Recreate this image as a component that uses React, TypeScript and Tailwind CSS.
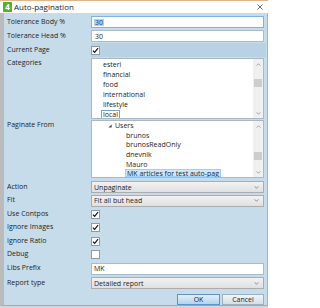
import React from 'react'

function Check() {
  return (
    <svg viewBox="0 0 9 9" className="w-[7px] h-[7px]">
      <path d="M1.2 4.6 L3.4 6.8 L7.8 1.4" fill="none" stroke="#111" strokeWidth="1.5" />
    </svg>
  )
}

function CheckBox({ checked }: { checked?: boolean }) {
  return (
    <div className="w-[9px] h-[9px] bg-white border border-[#8a9baa] flex items-center justify-center">
      {checked && <Check />}
    </div>
  )
}

function Chevron({ up, color = '#8a8a8a' }: { up?: boolean; color?: string }) {
  return (
    <svg viewBox="0 0 6 4" className="w-[5px] h-[3px]">
      <path d={up ? 'M0.5 3.5 L3 1 L5.5 3.5' : 'M0.5 0.5 L3 3 L5.5 0.5'} fill="none" stroke={color} strokeWidth="1" />
    </svg>
  )
}

function ScrollBar({ thumbTop }: { thumbTop: string }) {
  return (
    <div className="w-[10px] bg-[#f0f0f0] flex flex-col">
      <div className="h-[10px] flex items-center justify-center">
        <Chevron up />
      </div>
      <div className="flex-1">
        <div className={`${thumbTop} h-[8px] bg-[#cdcdcd] mx-[1px]`} />
      </div>
      <div className="h-[10px] flex items-center justify-center">
        <Chevron />
      </div>
    </div>
  )
}

function Select({ value }: { value: string }) {
  return (
    <div className="h-[12px] w-full border border-[#acacac] bg-gradient-to-b from-[#f2f2f2] to-[#e0e0e0] flex items-center pl-[2px] pr-[4px]">
      <span className="flex-1 leading-none">{value}</span>
      <Chevron color="#6f6f6f" />
    </div>
  )
}

function Label({ children, top }: { children: React.ReactNode; top?: boolean }) {
  return (
    <div className={top ? 'w-[84px] h-[10px] mt-[1px] flex items-center' : 'w-[84px] flex items-center'}>
      {children}
    </div>
  )
}

const categories = ['esteri', 'financial', 'food', 'international', 'lifestyle']
const users = ['brunos', 'brunosReadOnly', 'dnevnik', 'Mauro']

export default function App() {
  return (
    <div className="w-[268px] h-[308px] flex flex-col bg-[#c7dcea] text-[7px] text-[#1d1d1d] font-['Open_Sans',sans-serif] overflow-hidden border-t border-[#e2b48c]">
      <div className="h-[12px] bg-white flex items-center pl-[3px] pr-[5px]">
        <div className="w-[9px] h-[10px] bg-[#56b12c] text-white font-bold text-[8px] leading-none flex items-center justify-center">4</div>
        <span className="ml-[2px] flex-1 text-[8px] leading-none">Auto-pagination</span>
        <svg viewBox="0 0 8 8" className="w-[6px] h-[6px]">
          <path d="M0.5 0.5 L7.5 7.5 M7.5 0.5 L0.5 7.5" stroke="#222" strokeWidth="0.9" />
        </svg>
      </div>

      <div className="flex-1 flex flex-col pt-[2px] pl-[3px] pr-[3px] border-l-4 border-l-[#bbbbbb] border-r border-r-[#9fb5c6] border-b border-b-[#a7a7a7]">
        <div className="flex h-[14px]">
          <Label>Tolerance Body %</Label>
          <div className="w-[173px] flex items-center">
            <div className="h-[12px] w-full bg-white border border-[#7fb2e3] flex items-center pl-[2px]">
              <span className="bg-[#a9d1f4] text-[#1f3f74] leading-none px-[1px]">30</span>
            </div>
          </div>
        </div>
        <div className="flex h-[14px]">
          <Label>Tolerance Head %</Label>
          <div className="w-[173px] flex items-center">
            <div className="h-[12px] w-full bg-white border border-[#a9bccb] flex items-center pl-[3px] leading-none">30</div>
          </div>
        </div>
        <div className="flex h-[14px]">
          <Label>Current Page</Label>
          <div className="w-[175px] -mr-[2px] flex items-center bg-[#b8d2e4]">
            <CheckBox checked />
          </div>
        </div>

        <div className="flex h-[62px]">
          <Label top>Categories</Label>
          <div className="w-[173px] h-[61px] mt-[1px] bg-white border border-[#a9b8c4] flex">
            <div className="flex-1 overflow-hidden pl-[11px]">
              {categories.map((c) => (
                <div key={c} className="h-[10px] flex items-center leading-none">{c}</div>
              ))}
              <div className="h-[10px] flex items-center leading-none -ml-[2px]">
                <span className="border border-[#7c9fc4] px-[1px] h-[9px] flex items-center">local</span>
              </div>
            </div>
            <ScrollBar thumbTop="mt-[10px]" />
          </div>
        </div>

        <div className="flex h-[61px]">
          <Label top>Paginate From</Label>
          <div className="w-[173px] h-[58px] mt-[1px] bg-white border border-[#a9b8c4] flex">
            <div className="flex-1 overflow-hidden">
              <div className="h-[9.6px] flex items-center leading-none pl-[16px]">
                <svg viewBox="0 0 5 5" className="w-[4px] h-[4px]">
                  <path d="M4.5 0.5 L4.5 4.5 L0.5 4.5 Z" fill="#444" />
                </svg>
                <span className="ml-[3px]">Users</span>
              </div>
              {users.map((u) => (
                <div key={u} className="h-[9.6px] flex items-center leading-none pl-[34px]">{u}</div>
              ))}
              <div className="h-[9px] flex items-start leading-none pl-[33px]">
                <span className="bg-[#cce8ff] border border-[#99d1ff] px-[1px] h-[8.5px] flex items-center whitespace-nowrap">MK articles for test auto-pag</span>
              </div>
            </div>
            <ScrollBar thumbTop="mt-[21px]" />
          </div>
        </div>

        <div className="flex h-[14px]">
          <Label>Action</Label>
          <div className="w-[173px] flex items-center"><Select value="Unpaginate" /></div>
        </div>
        <div className="flex h-[13px]">
          <Label>Fit</Label>
          <div className="w-[173px] flex items-center"><Select value="Fit all but head" /></div>
        </div>
        <div className="flex h-[14px]">
          <Label>Use Contpos</Label>
          <div className="w-[173px] flex items-center"><CheckBox checked /></div>
        </div>
        <div className="flex h-[13px]">
          <Label>Ignore Images</Label>
          <div className="w-[173px] flex items-center"><CheckBox checked /></div>
        </div>
        <div className="flex h-[14px]">
          <Label>Ignore Ratio</Label>
          <div className="w-[173px] flex items-center"><CheckBox checked /></div>
        </div>
        <div className="flex h-[13px]">
          <Label>Debug</Label>
          <div className="w-[173px] flex items-center"><CheckBox /></div>
        </div>
        <div className="flex h-[15px]">
          <Label>Libs Prefix</Label>
          <div className="w-[173px] flex items-center">
            <div className="h-[12px] w-full bg-white border border-[#a9bccb] flex items-center pl-[2px] leading-none">MK</div>
          </div>
        </div>
        <div className="flex h-[14px]">
          <Label>Report type</Label>
          <div className="w-[173px] flex items-center"><Select value="Detailed report" /></div>
        </div>

        <div className="flex h-[15px] justify-end items-end gap-[2px]">
          <button className="w-[43px] h-[11px] border border-[#5f93c4] bg-gradient-to-b from-[#e2eff9] to-[#b3d4ee] leading-none text-[7px]">OK</button>
          <button className="w-[42px] h-[11px] border border-[#9bb0c1] bg-gradient-to-b from-[#f1f5f8] to-[#d3dfe8] leading-none text-[7px]">Cancel</button>
        </div>
      </div>
      <div className="h-[2px] bg-[#d6d6d6]" />
    </div>
  )
}
